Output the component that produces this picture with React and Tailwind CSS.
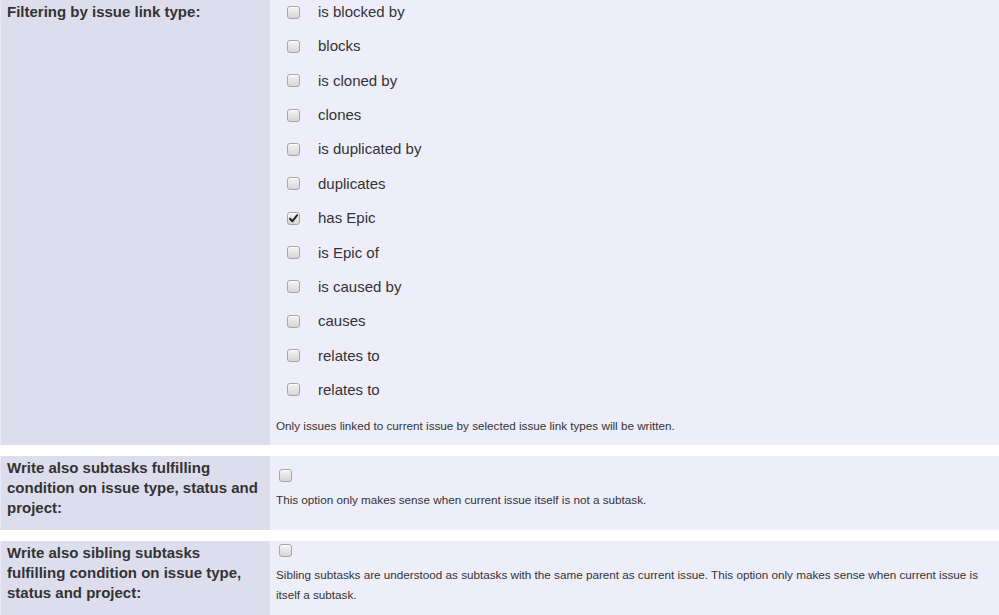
import React from "react";

function Box({ checked }) {
  return (
    <span className="relative inline-block w-[13px] h-[13px] shrink-0 rounded-[3px] border border-[#a6a6a6] bg-gradient-to-b from-[#f4f4f4] to-[#d6d6d6] shadow-[inset_0_1px_0_#ffffff]">
      {checked && (
        <svg viewBox="0 0 13 13" className="absolute left-[-1px] top-[-1px] w-[13px] h-[13px]">
          <path d="M3 6.8 L5.3 9.3 L10.2 3.2" fill="none" stroke="#222" strokeWidth="2" strokeLinecap="round" strokeLinejoin="round" />
        </svg>
      )}
    </span>
  );
}

const items = [
  ["is blocked by", false],
  ["blocks", false],
  ["is cloned by", false],
  ["clones", false],
  ["is duplicated by", false],
  ["duplicates", false],
  ["has Epic", true],
  ["is Epic of", false],
  ["is caused by", false],
  ["causes", false],
  ["relates to", false],
  ["relates to", false],
];

function Label({ children }) {
  return (
    <div className="w-[270px] shrink-0 bg-[#dddded] border-l border-[#e9e9f5] pl-[6px] pr-[10px] pt-[2px] text-[15px] leading-5 font-bold text-[#333]">
      {children}
    </div>
  );
}

export default function App() {
  return (
    <div className="w-[999px] h-[615px] overflow-hidden bg-white text-[#333]" style={{ fontFamily: '"Liberation Sans", Arial, sans-serif' }}>
      <div className="flex">
        <Label>Filtering by issue link type:</Label>
        <div className="flex-1 bg-[#eeeefb] pl-[6px] pt-[2px] pb-[9px]">
          <div className="flex flex-col">
            {items.map(([t, c], i) => (
              <div key={i} className="flex items-center h-5 mb-[14.36px] pl-[11px]">
                <Box checked={c} />
                <span className="ml-[18px] text-[15px] leading-5">{t}</span>
              </div>
            ))}
          </div>
          <div className="mt-[2px] text-[11.7px] leading-5">Only issues linked to current issue by selected issue link types will be written.</div>
        </div>
      </div>
      <div className="h-[11px]" />
      <div className="flex">
        <Label>Write also subtasks fulfilling condition on issue type, status and project:</Label>
        <div className="flex-1 bg-[#eeeefb] pl-[6px] pt-[13px] pb-[20px]">
          <div className="flex pl-[3px]">
            <Box />
          </div>
          <div className="mt-[8px] text-[11.7px] leading-5">This option only makes sense when current issue itself is not a subtask.</div>
        </div>
      </div>
      <div className="h-[11px]" />
      <div className="flex">
        <Label>Write also sibling subtasks fulfilling condition on issue type, status and project:</Label>
        <div className="flex-1 bg-[#eeeefb] pl-[6px] pr-[20px] pt-[3px] pb-[20px]">
          <div className="flex pl-[3px]">
            <Box />
          </div>
          <div className="mt-[8px] text-[11.7px] leading-5">Sibling subtasks are understood as subtasks with the same parent as current issue. This option only makes sense when current issue is itself a subtask.</div>
        </div>
      </div>
    </div>
  );
}
